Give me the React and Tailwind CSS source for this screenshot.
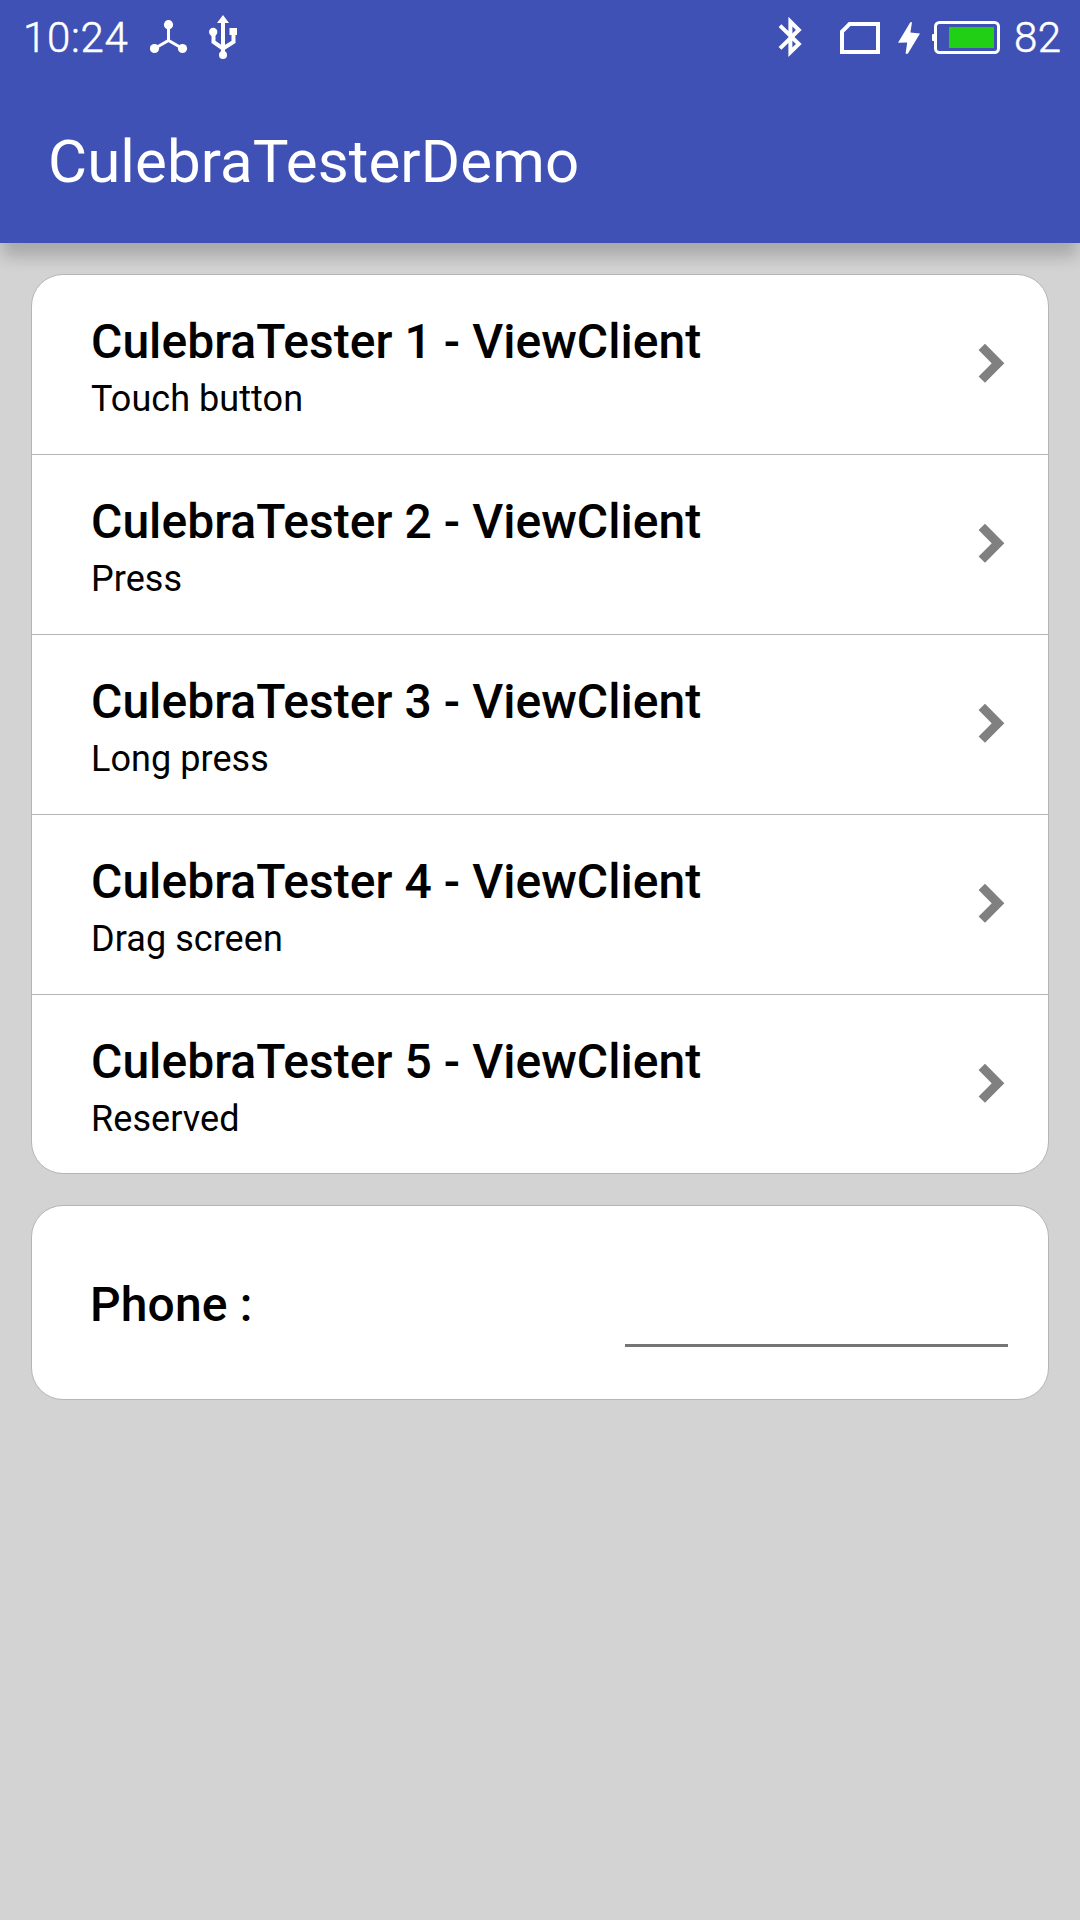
const ITEMS = [
  { title: 'CulebraTester 1 - ViewClient', detail: 'Touch button' },
  { title: 'CulebraTester 2 - ViewClient', detail: 'Press' },
  { title: 'CulebraTester 3 - ViewClient', detail: 'Long press' },
  { title: 'CulebraTester 4 - ViewClient', detail: 'Drag screen' },
  { title: 'CulebraTester 5 - ViewClient', detail: 'Reserved' },
];

function HubIcon() {
  return (
    <svg className="ml-[21px] shrink-0" width="38" height="36" viewBox="0 0 38 36" fill="white">
      <path d="M18.5 4.5V21M4.5 28.5 18.5 20.5 32.5 28.5" fill="none" stroke="white" strokeWidth="3" />
      <circle cx="18.5" cy="4.7" r="4.6" />
      <circle cx="4.5" cy="28.5" r="4.6" />
      <circle cx="32.5" cy="28.5" r="4.6" />
    </svg>
  );
}

function UsbIcon() {
  return (
    <svg className="mb-[1px] ml-[21px] shrink-0" width="28" height="44" viewBox="0 0 28 44" fill="white">
      <path d="M14 6V40M4.5 17V27L14 33.5 24.5 27V17" fill="none" stroke="white" strokeWidth="4" />
      <path d="M14 0 20 8H8ZM20.5 13h7.5v7h-7.5z" />
      <circle cx="4.2" cy="17" r="4.2" />
      <circle cx="14" cy="40" r="4" />
    </svg>
  );
}

function BluetoothIcon() {
  return (
    <svg className="mb-[1px] shrink-0" width="24" height="40" viewBox="0 0 24 40" fill="none" stroke="white" strokeWidth="4">
      <path d="M2 8.6 20.8 27 12.4 35.2V4.6L20.8 13 2 31.4" />
    </svg>
  );
}

function StatusBar() {
  return (
    <div className="flex h-[75px] items-center justify-between text-white">
      <div className="flex items-center pl-[23px]">
        <span className="w-[106px] whitespace-nowrap text-[42px] leading-[50px] font-light tracking-[0.7px] [-webkit-text-stroke:0.5px_white]">10:24</span>
        <HubIcon />
        <UsbIcon />
      </div>
      <div className="flex w-[302px] items-center">
        <BluetoothIcon />
        <svg className="ml-[38px] shrink-0" width="40" height="32" viewBox="0 0 40 32" fill="none" stroke="white" strokeWidth="4">
          <path d="M2 9.6 9.6 2H38V30H2Z" />
        </svg>
        <svg className="ml-[18px] shrink-0" width="22" height="32" viewBox="0 0 22 32" fill="white">
          <path d="M12.3.3H14L12.4 10.5 22 11.5 9.8 31.7H7.6L9.2 20.5 0 20.8Z" />
        </svg>
        <svg className="ml-[12px] shrink-0" width="68" height="33" viewBox="0 0 68 33">
          <rect x="3.5" y="1.5" width="63" height="30" rx="4" fill="none" stroke="white" strokeWidth="3" />
          <rect x="0" y="13" width="3" height="7" rx="1" fill="white" />
          <rect x="17" y="6" width="45" height="21" fill="#21d014" />
        </svg>
        <span className="ml-[14px] text-[42px] leading-[50px] font-light tracking-[0.5px] [-webkit-text-stroke:0.5px_white]">82</span>
      </div>
    </div>
  );
}

function Chevron() {
  return (
    <svg className="shrink-0" width="27" height="40" viewBox="0 0 27 40" fill="none" stroke="#808080" strokeWidth="9">
      <path d="M3.8 3.9 20 20.3 3.8 36.7" />
    </svg>
  );
}

export default function App() {
  return (
    <div className="flex h-[1920px] w-[1080px] flex-col overflow-hidden bg-[#d3d3d3] font-['Roboto',sans-serif] text-black">
      <header className="h-[243px] shrink-0 bg-[#3f51b5] shadow-[0_16px_14px_-3px_rgba(0,0,0,0.13),0_12px_20px_rgba(0,0,0,0.09)]">
        <StatusBar />
        <h1 className="pt-[52px] pl-[48px] text-[60px] leading-[70px] font-normal tracking-[0.1px] text-white">CulebraTesterDemo</h1>
      </header>
      <main className="flex flex-col gap-[31px] pt-[31px] pr-[31px] pl-[31px]">
        <ul className="rounded-[32px] border border-[#b5b5b5] bg-white">
          {ITEMS.map((item) => (
            <li
              key={item.title}
              className="flex h-[180px] items-start justify-between border-b border-[#b5b5b5] pr-[43px] pl-[59px] last:h-[178px] last:border-b-0"
            >
              <div className="pt-[39px]">
                <div className="text-[48px] leading-[56px] font-medium tracking-[0.04px]">{item.title}</div>
                <div className="pt-[8px] text-[36px] leading-[42px] tracking-[0.06px]">{item.detail}</div>
              </div>
              <div className="pt-[68px]">
                <Chevron />
              </div>
            </li>
          ))}
        </ul>
        <section className="flex h-[195px] items-center justify-between rounded-[32px] border border-[#b5b5b5] bg-white pr-[40px] pl-[58px]">
          <label htmlFor="phone" className="pt-[4px] text-[48px] leading-[56px] font-medium tracking-[0.15px]">Phone :</label>
          <input id="phone" type="tel" className="mt-[4px] h-[84px] w-[383px] border-b-[3px] border-[#757575] bg-transparent outline-none" />
        </section>
      </main>
    </div>
  );
}
